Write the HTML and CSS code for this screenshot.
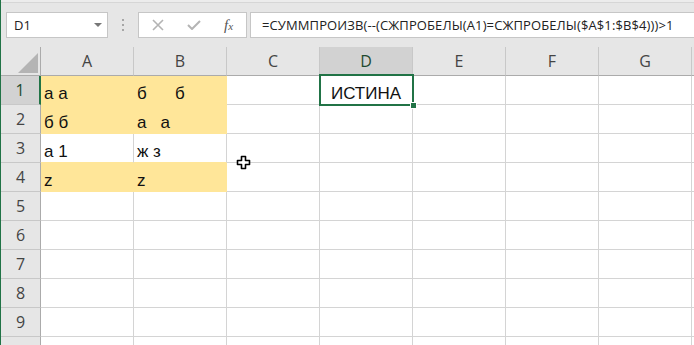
FILE: index.html
```html
<!DOCTYPE html>
<html lang="ru">
<head>
  <meta charset="UTF-8">
  <title>Книга1 - Excel</title>
  <link rel="stylesheet" href="styles.css">
</head>
<body>
  <div class="app">
    <div class="toolbar">
      <div class="namebox">
        <span>D1</span>
        <span class="caret"></span>
      </div>
      <div class="grip"><i></i><i></i><i></i></div>
      <div class="fxbox">
        <svg class="btn" width="12" height="12" viewBox="0 0 12 12"><path d="M1 1L11 11M11 1L1 11" stroke="#b4b4b4" stroke-width="1.6" fill="none"/></svg>
        <svg class="btn" width="14" height="10" viewBox="0 0 14 10"><path d="M1 5L5 9L13 1" stroke="#b4b4b4" stroke-width="2" fill="none"/></svg>
        <span class="fx"><i>f</i><i class="fx-x">x</i></span>
      </div>
      <div class="formula">=СУММПРОИЗВ(--(СЖПРОБЕЛЫ(A1)=СЖПРОБЕЛЫ($A$1:$B$4)))&gt;1</div>
    </div>

    <div class="sheet">
      <div class="h corner"><span class="tri"></span></div>
      <div class="h col">A</div>
      <div class="h col">B</div>
      <div class="h col">C</div>
      <div class="h col on">D</div>
      <div class="h col">E</div>
      <div class="h col">F</div>
      <div class="h col">G</div>
      <div class="h col rest"></div>

      <div class="h row on">1</div>
      <div class="c fill">а а</div>
      <div class="c fill">б      б</div>
      <div class="c"></div>
      <div class="c active">ИСТИНА<span class="sel-box"><span class="handle"></span></span></div>
      <div class="c"></div>
      <div class="c"></div>
      <div class="c"></div>
      <div class="c rest"></div>

      <div class="h row">2</div>
      <div class="c fill">б б</div>
      <div class="c fill">а   а</div>
      <div class="c"></div>
      <div class="c"></div>
      <div class="c"></div>
      <div class="c"></div>
      <div class="c"></div>
      <div class="c rest"></div>

      <div class="h row">3</div>
      <div class="c above-fill">а 1</div>
      <div class="c above-fill">ж з</div>
      <div class="c"></div>
      <div class="c"></div>
      <div class="c"></div>
      <div class="c"></div>
      <div class="c"></div>
      <div class="c rest"></div>

      <div class="h row">4</div>
      <div class="c fill">z</div>
      <div class="c fill">z</div>
      <div class="c"></div>
      <div class="c"></div>
      <div class="c"></div>
      <div class="c"></div>
      <div class="c"></div>
      <div class="c rest"></div>

      <div class="h row">5</div>
      <div class="c"></div><div class="c"></div><div class="c"></div><div class="c"></div>
      <div class="c"></div><div class="c"></div><div class="c"></div><div class="c rest"></div>

      <div class="h row">6</div>
      <div class="c"></div><div class="c"></div><div class="c"></div><div class="c"></div>
      <div class="c"></div><div class="c"></div><div class="c"></div><div class="c rest"></div>

      <div class="h row">7</div>
      <div class="c"></div><div class="c"></div><div class="c"></div><div class="c"></div>
      <div class="c"></div><div class="c"></div><div class="c"></div><div class="c rest"></div>

      <div class="h row">8</div>
      <div class="c"></div><div class="c"></div><div class="c"></div><div class="c"></div>
      <div class="c"></div><div class="c"></div><div class="c"></div><div class="c rest"></div>

      <div class="h row">9</div>
      <div class="c"></div><div class="c"></div><div class="c"></div><div class="c"></div>
      <div class="c"></div><div class="c"></div><div class="c"></div><div class="c rest"></div>

      <!-- row 10 is cut by the window edge, its number is not visible -->
      <div class="h row"></div>
      <div class="c"></div><div class="c"></div><div class="c"></div><div class="c"></div>
      <div class="c"></div><div class="c"></div><div class="c"></div><div class="c rest"></div>
    </div>

    <svg class="cursor" width="15" height="15" viewBox="0 0 15 15">
      <path d="M5.5 1.5H9.5V5.5H13.5V9.5H9.5V13.5H5.5V9.5H1.5V5.5H5.5Z" fill="#fff" stroke="#000" stroke-width="1.6" stroke-linejoin="round"/>
    </svg>
  </div>
</body>
</html>
```

FILE: styles.css
```css
html, body {
  margin: 0;
  padding: 0;
  background: #fff;
}
.app {
  position: relative;
  width: 693px;
  height: 345px;
  overflow: hidden;
  border-left: 1px solid #217346;
  font-family: 'Liberation Sans', Arial, sans-serif;
}

/* formula bar */
.toolbar {
  display: flex;
  align-items: flex-start;
  height: 47px;
  box-sizing: border-box;
  padding: 12px 0 0 5px;
  background: #e6e6e6;
  box-shadow: inset 0 2px 0 #ececec, inset 0 3px 0 #d6d6d6;
}
.namebox {
  display: flex;
  align-items: center;
  justify-content: space-between;
  width: 102px;
  height: 26px;
  box-sizing: border-box;
  padding: 0 5px 0 7px;
  background: #fff;
  border: 1px solid #c6c6c6;
  font-family: 'Open Sans', sans-serif;
  font-size: 13px;
  color: #222;
}
.caret {
  width: 0;
  height: 0;
  border-left: 4px solid transparent;
  border-right: 4px solid transparent;
  border-top: 4px solid #777;
}
.grip {
  display: flex;
  flex-direction: column;
  gap: 3px;
  margin: 7px 14px 0 14px;
}
.grip i {
  width: 2px;
  height: 2px;
  background: #a6a6a6;
}
.fxbox {
  display: flex;
  align-items: center;
  width: 109px;
  height: 26px;
  box-sizing: border-box;
  padding: 0 0 0 13px;
  background: #fff;
  border: 1px solid #c6c6c6;
}
.fxbox .btn {
  margin-right: 23px;
}
.fx {
  font-family: 'Liberation Serif', serif;
  font-size: 15px;
  color: #555;
}
.fx-x {
  font-size: 11px;
}
.formula {
  flex: 1;
  height: 26px;
  box-sizing: border-box;
  margin-left: 3px;
  padding: 0 0 0 11px;
  background: #fff;
  border: 1px solid #c6c6c6;
  border-right: none;
  font-family: 'Open Sans', sans-serif;
  font-size: 13px;
  letter-spacing: 0.11px;
  line-height: 24px;
  color: #222;
  white-space: nowrap;
}

/* grid */
.sheet {
  display: grid;
  grid-template-columns: 40px repeat(7, 93px) 1fr;
  grid-auto-rows: 29px;
}
.sheet > div {
  box-sizing: border-box;
  border-right: 1px solid #d4d4d4;
  border-bottom: 1px solid #d4d4d4;
}
.h {
  display: flex;
  align-items: center;
  justify-content: center;
  background: #e6e6e6;
  font-family: 'Open Sans', sans-serif;
  font-size: 16px;
  color: #444;
}
.sheet > .col {
  border-right-color: #c8c8c8;
  border-bottom-color: #ababab;
}
.sheet > .row {
  border-right-color: #ababab;
  border-bottom-color: #c8c8c8;
}
.sheet > .corner {
  position: relative;
  border-right-color: #ababab;
  border-bottom-color: #ababab;
}
.tri {
  position: absolute;
  right: 2px;
  bottom: 2px;
  width: 0;
  height: 0;
  border-left: 20px solid transparent;
  border-bottom: 20px solid #b4b4b4;
}
.sheet > .col.on {
  background: #d2d2d2;
  color: #1e4a30;
  border-bottom-color: #217346;
}
.sheet > .row.on {
  background: #d2d2d2;
  color: #1e4a30;
  border-right: 2px solid #217346;
}
.sheet > .rest {
  border-right: none;
}
.c {
  display: flex;
  align-items: flex-end;
  padding: 0 3px 1px;
  font-size: 17px;
  line-height: 19px;
  color: #111;
  white-space: pre;
}
.sheet > .fill {
  background: #ffe699;
  border-color: #ffe699;
}
.sheet > .above-fill {
  border-bottom-color: #ffe699;
}
.active {
  position: relative;
  justify-content: center;
}
.sel-box {
  position: absolute;
  top: -2px;
  left: -1px;
  right: -2px;
  bottom: -2px;
  border: 2px solid #217346;
}
.handle {
  position: absolute;
  right: -5px;
  bottom: -5px;
  width: 5px;
  height: 5px;
  background: #217346;
  border: 1px solid #fff;
}
.cursor {
  position: absolute;
  left: 235px;
  top: 155px;
}
```
